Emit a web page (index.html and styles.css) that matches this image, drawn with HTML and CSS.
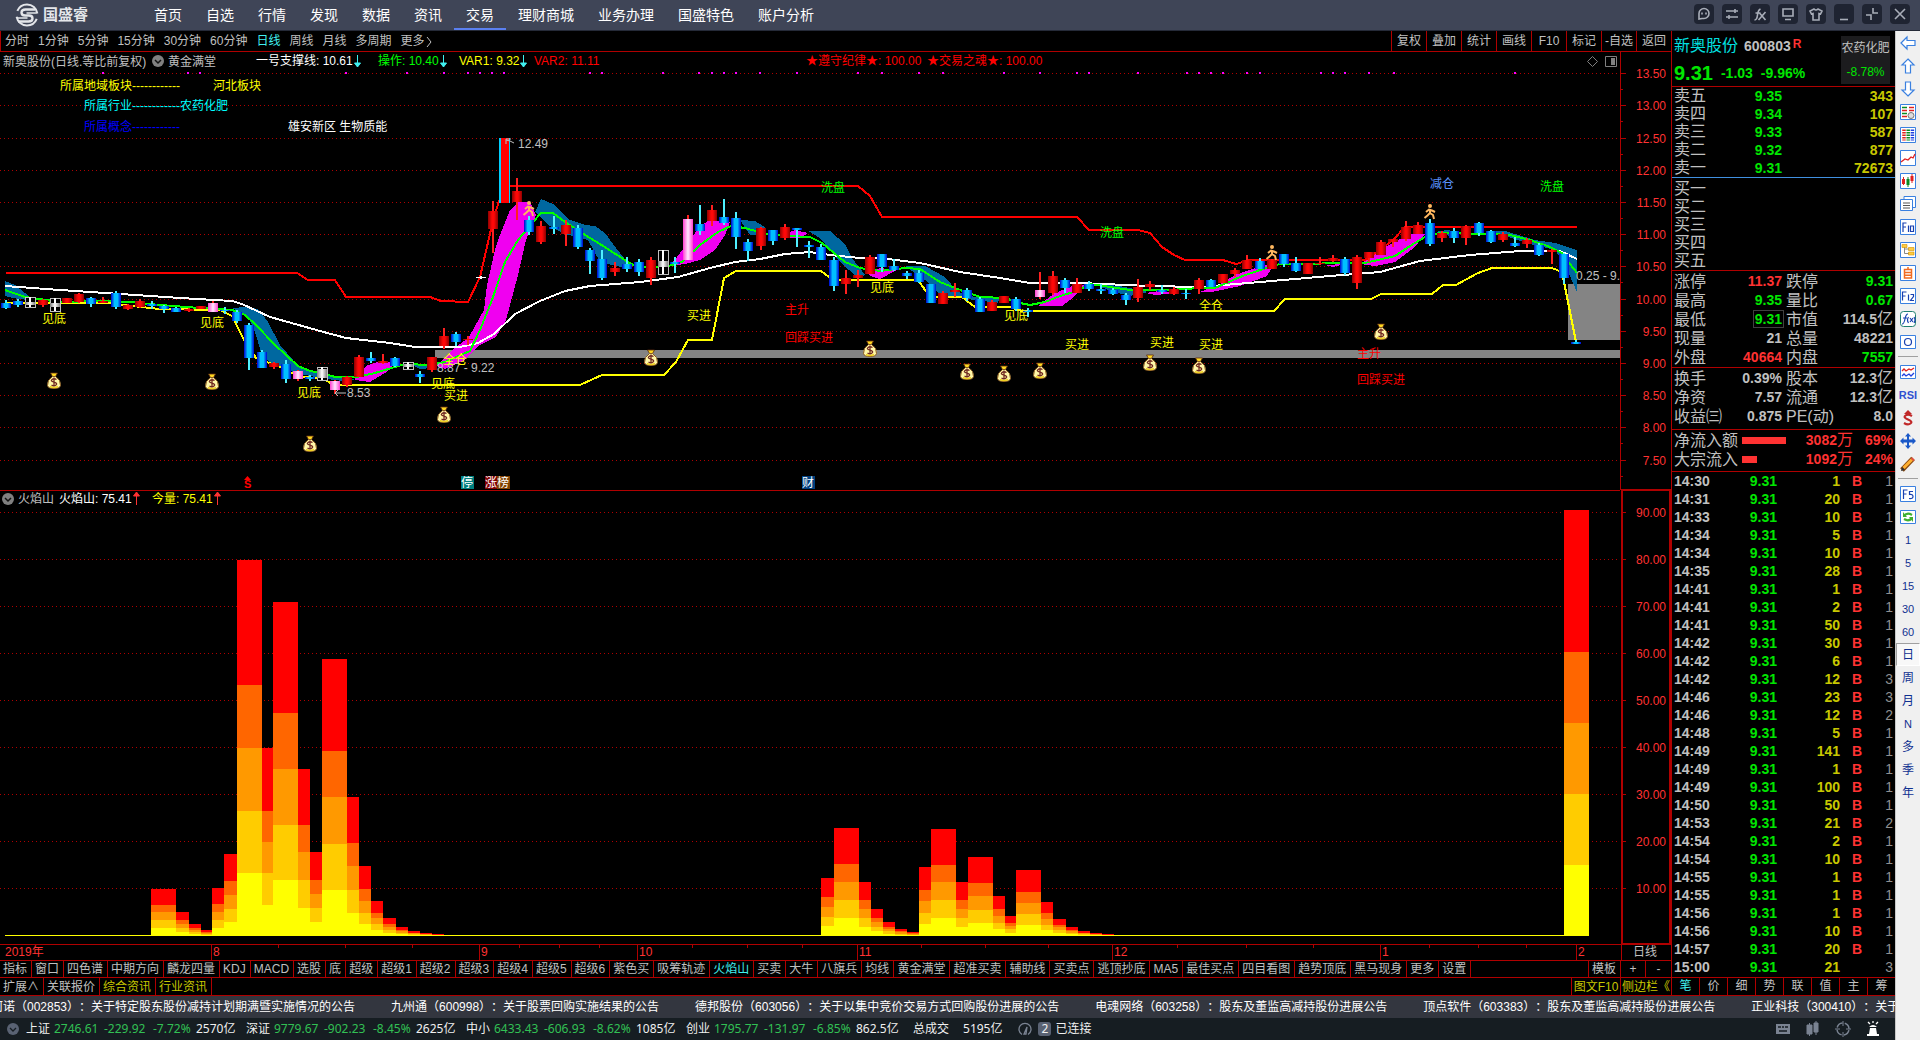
FILE: index.html
```html
<!DOCTYPE html>
<html lang="zh-CN">
<head>
<meta charset="utf-8">
<title>国盛睿 - 新奥股份 600803</title>
<link rel="stylesheet" href="styles.css">
</head>
<body>
<div class="app">
<header class="topbar">
  <div class="brand">
    <svg class="brand-mark" viewBox="0 0 26 26"><circle cx="13" cy="13" r="10.5" fill="none" stroke="#e4e6ea" stroke-width="2" stroke-dasharray="27 6 27 6" stroke-dashoffset="-4"/><path d="M21 7.500H11.500Q7.500 7.500 7.500 10.500T11 13.500H15Q18.500 13.500 18.500 16.500T14.500 19.500H4" fill="none" stroke="#e4e6ea" stroke-width="2.400"/><path d="M22.500 11H12.500M13.500 16H3.500" stroke="#e4e6ea" stroke-width="1.300"/></svg>
    <span>国盛睿</span>
  </div>
  <nav class="nav">
    <a href="#">首页</a><a href="#">自选</a><a href="#">行情</a><a href="#">发现</a><a href="#">数据</a><a href="#">资讯</a><a href="#" class="current">交易</a><a href="#">理财商城</a><a href="#">业务办理</a><a href="#">国盛特色</a><a href="#">账户分析</a>
  </nav>
  <div class="window-tools">
    <button aria-label="客服"><svg viewBox="0 0 20 20"><path d="M5 15V9.500A5 5 0 1 1 10 14.500L8 14.500z"/><path d="M8 8.500v2M12 8.500v2"/></svg></button>
    <button aria-label="切换"><svg viewBox="0 0 20 20"><path d="M4 7h12M4 13h12M13 5v4M7 11v4"/></svg></button>
    <button aria-label="公式"><svg viewBox="0 0 20 20"><path d="M4.500 16q2.500 0 3-5t3-6M5.500 9h5M9.500 9l6 7M15.500 8l-7 8"/></svg></button>
    <button aria-label="屏幕"><svg viewBox="0 0 20 20"><path d="M5 5h10v7H5zM7 15.500h6"/></svg></button>
    <button aria-label="皮肤"><svg viewBox="0 0 20 20"><path d="M8 5l-4 2 1.500 3 1.500-.5V16h6V9.500l1.500.5L16 7l-4-2q-2 2-4 0z"/></svg></button>
    <button aria-label="最小化"><svg viewBox="0 0 20 20"><path d="M6 15.500h8"/></svg></button>
    <button aria-label="还原"><svg viewBox="0 0 20 20"><path d="M11 4v5h5M9 16v-5H4"/></svg></button>
    <button aria-label="关闭"><svg viewBox="0 0 20 20"><path d="M5 5l10 10M15 5L5 15"/></svg></button>
  </div>
</header>

<div class="body">
<main class="main">
<div class="workspace">
<section class="charts">
  <div class="period-bar">
    <div class="periods"><button>分时</button><button>1分钟</button><button>5分钟</button><button>15分钟</button><button>30分钟</button><button>60分钟</button><button class="on">日线</button><button>周线</button><button>月线</button><button>多周期</button><button>更多<svg class="chevron" viewBox="0 0 8 12"><path d="M2 1l4 5-4 5" fill="none" stroke="#c0c0c0"/></svg></button></div>
    <div class="chart-tools"><button>复权</button><button>叠加</button><button>统计</button><button>画线</button><button>F10</button><button>标记</button><button>-自选</button><button>返回</button></div>
  </div>

  <svg class="chart" viewBox="0 52 1671 439">
    <defs>
      <linearGradient id="blue"><stop offset="0" stop-color="#0000d0"/><stop offset=".35" stop-color="#00c0ff"/><stop offset=".65" stop-color="#00c0ff"/><stop offset="1" stop-color="#0000d0"/></linearGradient>
      <linearGradient id="red"><stop offset="0" stop-color="#900000"/><stop offset=".4" stop-color="#ff0808"/><stop offset=".6" stop-color="#ff0808"/><stop offset="1" stop-color="#900000"/></linearGradient>
      <linearGradient id="pink"><stop offset="0" stop-color="#ff40d0"/><stop offset=".5" stop-color="#ffe8ff"/><stop offset="1" stop-color="#ff40d0"/></linearGradient>
      <linearGradient id="white"><stop offset="0" stop-color="#808080"/><stop offset=".5" stop-color="#ffffff"/><stop offset="1" stop-color="#808080"/></linearGradient>
      <g id="bag"><path d="M-3.500-8h7L1.500-4.500h-3z" fill="#ffd820" stroke="#5a2a10" stroke-width=".8"/><path d="M-1.500-4.500h3Q7-1 6.500 4.500 6 7.500 0 7.500T-6.500 4.500Q-7-1-1.500-4.500z" fill="#fff7a8" stroke="#8a5a20" stroke-width="1"/><path d="M-4 5.500Q0 7.500 4 5.500" fill="none" stroke="#f0d020" stroke-width="1.500"/><path d="M2.500-1.500Q0-3-2-1.500T0 1.200 2 4-2.500 4M0-3.500v9" fill="none" stroke="#702820" stroke-width="1.300"/></g>
      <g id="runner" fill="none" stroke="#ffb860" stroke-width="2"><circle cx="0" cy="-6" r="1" /><path d="M0-3v4M-4 0l3-2.500 3 1 3 1.500M0 1l-2.500 2.500L-5.500 6M0 1l3 2 1 4"/></g>
      <clipPath id="plot"><rect x="0" y="52" width="1620" height="438"/></clipPath>
    </defs>
    <g id="price-grid" class="crisp"></g>
    <g id="price-plot" class="crisp" clip-path="url(#plot)"></g>
    <g class="frame crisp"><path d="M1620.500 52V490M0 490.500H1620"/><path d="M1621 490H1671" stroke-width="2"/></g>

    <g class="gray">
      <text x="3" y="66">新奥股份(日线.等比前复权)</text><text x="168" y="66">黄金满堂</text>
      <text x="518" y="148">12.49</text><text x="347" y="397">8.53</text><text x="437" y="372">8.87 - 9.22</text>
      <text x="1576" y="280" clip-path="url(#plot)">0.25 - 9.36</text>
    </g>
    <circle cx="158" cy="61" r="6" fill="#808080"/><path d="M155 60l3 3 3-3" fill="none" stroke="#111" stroke-width="1.500"/>
    <path d="M514 143l-4-2-4-1M506 144v-5h5M346 393h-11M338 390l-3 3 3 3" fill="none" stroke="#c0c0c0"/>
    <g class="legend">
      <text x="256" y="65" fill="#fff">一号支撑线: 10.61</text><text x="378" y="65" fill="#0f0">操作: 10.40</text><text x="459" y="65" fill="#ff0">VAR1: 9.32</text><text x="534" y="65" fill="#f00">VAR2: 11.11</text>
      <text x="806" y="65" fill="#f00">★遵守纪律★: 100.00</text><text x="927" y="65" fill="#f00">★交易之魂★: 100.00</text>
      <path d="M357.500 55v12M354.500 63h6l-3 4zM443.500 55v12M440.500 63h6l-3 4zM523.500 55v12M520.500 63h6l-3 4z" fill="#40f0f0" stroke="#40f0f0"/>
    </g>
    <path d="M1592.500 56.500l5 5-5 5-5-5z M1605.500 56.500h11v10h-11z" fill="none" stroke="#808080"/><path d="M1611 58h4v7h-4z" fill="#808080"/>
    <g fill="#ff0"><text x="60" y="90">所属地域板块------------</text><text x="213" y="90">河北板块</text></g>
    <g fill="#0ff"><text x="84" y="110">所属行业------------农药化肥</text></g>
    <text x="84" y="131" fill="#00f">所属概念------------</text>
    <text x="288" y="131" fill="#fff">雄安新区 生物质能</text>
    <g fill="#0f0"><text x="821" y="192">洗盘</text><text x="1100" y="237">洗盘</text><text x="1540" y="191">洗盘</text></g>
    <text x="1430" y="188" fill="#5c94ff">减仓</text>
    <g fill="#ff0">
      <text x="42" y="323">见底</text><text x="200" y="327">见底</text><text x="297" y="397">见底</text><text x="431" y="388">见底</text><text x="870" y="292">见底</text><text x="1004" y="320">见底</text>
      <text x="444" y="400">买进</text><text x="687" y="320">买进</text><text x="1065" y="349">买进</text><text x="1150" y="347">买进</text><text x="1199" y="349">买进</text>
      <text x="443" y="364">全仓</text><text x="1199" y="310">全仓</text>
    </g>
    <g fill="#f00"><text x="785" y="314">主升</text><text x="785" y="342">回踩买进</text><text x="1357" y="358">主升</text><text x="1357" y="384">回踩买进</text></g>
    <path d="M244 480l3.500-4 3.500 4z" fill="#f00"/><text x="244" y="488" fill="#f00" class="strong">S</text>
    <path d="M461 476h13v13h-13z" fill="#008080"/><path d="M485 476h12v13h-12z" fill="#800000"/><path d="M497 476h13v13h-13z" fill="#804000"/><path d="M802 476h13v13h-13z" fill="#004080"/>
    <g fill="#fff"><text x="461" y="487">停</text><text x="485" y="487">涨榜</text><text x="802" y="487">财</text></g>
  </svg>

  <svg class="chart" viewBox="0 491 1671 470">
    <g id="volume-grid" class="crisp"></g>
    <g id="volume-plot" class="crisp"></g>
    <g class="frame crisp"><path d="M0 944.500H1671M0 960.500H1671M1621.500 944V961"/><path d="M1622 491V944M1670 491V944M1621 944H1671" stroke-width="2"/></g>
    <g id="dates" class="crisp"></g>
    <circle cx="8" cy="499" r="6" fill="#808080"/><path d="M5 498l3 3 3-3" fill="none" stroke="#111" stroke-width="1.500"/>
    <text x="18" y="503" fill="#c0c0c0">火焰山</text><text x="59" y="503" fill="#fff">火焰山: 75.41</text><text x="152" y="503" fill="#ff0">今量: 75.41</text>
    <path d="M136.500 505v-12M133.500 496h6l-3-4zM217.500 505v-12M214.500 496h6l-3-4z" fill="#ff3232" stroke="#ff3232"/>
    <text x="5" y="956" class="axis">2019年</text><text x="1633" y="956" fill="#c0c0c0">日线</text>
  </svg>

  <div class="tabs">
    <button>指标</button><button>窗口</button><button>四色谱</button><button>中期方向</button><button>麟龙四量</button><button>KDJ</button><button>MACD</button><button>选股</button><button>底</button><button>超级</button><button>超级1</button><button>超级2</button><button>超级3</button><button>超级4</button><button>超级5</button><button>超级6</button><button>紫色买</button><button>吸筹轨迹</button><button class="on">火焰山</button><button>买卖</button><button>大牛</button><button>八旗兵</button><button>均线</button><button>黄金满堂</button><button>超准买卖</button><button>辅助线</button><button>买卖点</button><button>逃顶抄底</button><button>MA5</button><button>最佳买点</button><button>四目看图</button><button>趋势顶底</button><button>黑马现身</button><button>更多</button><button>设置</button>
    <span class="fill"></span>
    <button>模板</button><button class="square">+</button><button class="square">-</button>
  </div>
  <div class="tabs second">
    <button>扩展∧</button><button>关联报价</button><button class="news">综合资讯</button><button class="news">行业资讯</button>
    <span class="fill"></span>
    <button class="news wide">图文F10</button><button class="news wide">侧边栏《</button>
  </div>
</section>

<aside class="quote">
  <div class="quote-head">
    <div>
      <div class="name"><b>新奥股份</b><span>600803</span><sup>R</sup></div>
      <div class="last"><strong>9.31</strong><span>-1.03</span><span>-9.96%</span></div>
    </div>
    <div class="sector"><span>农药化肥</span><span class="g">-8.78%</span></div>
  </div>
  <table class="book sell"><tbody>
    <tr><th>卖五</th><td>9.35</td><td>343</td></tr><tr><th>卖四</th><td>9.34</td><td>107</td></tr><tr><th>卖三</th><td>9.33</td><td>587</td></tr><tr><th>卖二</th><td>9.32</td><td>877</td></tr><tr><th>卖一</th><td>9.31</td><td>72673</td></tr>
  </tbody></table>
  <table class="book buy"><tbody>
    <tr><th>买一</th><td></td><td></td></tr><tr><th>买二</th><td></td><td></td></tr><tr><th>买三</th><td></td><td></td></tr><tr><th>买四</th><td></td><td></td></tr><tr><th>买五</th><td></td><td></td></tr>
  </tbody></table>
  <table class="stats"><tbody>
    <tr><th>涨停</th><td class="r">11.37</td><th>跌停</th><td class="g">9.31</td></tr>
    <tr><th>最高</th><td class="g">9.35</td><th>量比</th><td class="g">0.67</td></tr>
    <tr><th>最低</th><td class="g"><span class="boxed">9.31</span></td><th>市值</th><td>114.5<i>亿</i></td></tr>
    <tr><th>现量</th><td>21</td><th>总量</th><td>48221</td></tr>
    <tr><th>外盘</th><td class="r">40664</td><th>内盘</th><td class="g">7557</td></tr>
  </tbody></table>
  <table class="stats ratios"><tbody>
    <tr><th>换手</th><td>0.39%</td><th>股本</th><td>12.3<i>亿</i></td></tr>
    <tr><th>净资</th><td>7.57</td><th>流通</th><td>12.3<i>亿</i></td></tr>
    <tr><th>收益㈢</th><td>0.875</td><th>PE(动)</th><td>8.0</td></tr>
  </tbody></table>
  <table class="flow"><tbody>
    <tr><th>净流入额</th><td class="meter"><span style="width:44px"></span></td><td>3082<i>万</i></td><td>69%</td></tr>
    <tr><th>大宗流入</th><td class="meter"><span style="width:15px"></span></td><td>1092<i>万</i></td><td>24%</td></tr>
  </tbody></table>
  <table class="trades"><tbody>
    <tr><td>14:30</td><td>9.31</td><td>1</td><td>B</td><td>1</td></tr>
    <tr><td>14:31</td><td>9.31</td><td>20</td><td>B</td><td>1</td></tr>
    <tr><td>14:33</td><td>9.31</td><td>10</td><td>B</td><td>1</td></tr>
    <tr><td>14:34</td><td>9.31</td><td>5</td><td>B</td><td>1</td></tr>
    <tr><td>14:34</td><td>9.31</td><td>10</td><td>B</td><td>1</td></tr>
    <tr><td>14:35</td><td>9.31</td><td>28</td><td>B</td><td>1</td></tr>
    <tr><td>14:41</td><td>9.31</td><td>1</td><td>B</td><td>1</td></tr>
    <tr><td>14:41</td><td>9.31</td><td>2</td><td>B</td><td>1</td></tr>
    <tr><td>14:41</td><td>9.31</td><td>50</td><td>B</td><td>1</td></tr>
    <tr><td>14:42</td><td>9.31</td><td>30</td><td>B</td><td>1</td></tr>
    <tr><td>14:42</td><td>9.31</td><td>6</td><td>B</td><td>1</td></tr>
    <tr><td>14:42</td><td>9.31</td><td>12</td><td>B</td><td>3</td></tr>
    <tr><td>14:46</td><td>9.31</td><td>23</td><td>B</td><td>3</td></tr>
    <tr><td>14:46</td><td>9.31</td><td>12</td><td>B</td><td>2</td></tr>
    <tr><td>14:48</td><td>9.31</td><td>5</td><td>B</td><td>1</td></tr>
    <tr><td>14:49</td><td>9.31</td><td>141</td><td>B</td><td>1</td></tr>
    <tr><td>14:49</td><td>9.31</td><td>1</td><td>B</td><td>1</td></tr>
    <tr><td>14:49</td><td>9.31</td><td>100</td><td>B</td><td>1</td></tr>
    <tr><td>14:50</td><td>9.31</td><td>50</td><td>B</td><td>1</td></tr>
    <tr><td>14:53</td><td>9.31</td><td>21</td><td>B</td><td>2</td></tr>
    <tr><td>14:54</td><td>9.31</td><td>2</td><td>B</td><td>1</td></tr>
    <tr><td>14:54</td><td>9.31</td><td>10</td><td>B</td><td>1</td></tr>
    <tr><td>14:55</td><td>9.31</td><td>1</td><td>B</td><td>1</td></tr>
    <tr><td>14:55</td><td>9.31</td><td>1</td><td>B</td><td>1</td></tr>
    <tr><td>14:56</td><td>9.31</td><td>1</td><td>B</td><td>1</td></tr>
    <tr><td>14:56</td><td>9.31</td><td>10</td><td>B</td><td>1</td></tr>
    <tr><td>14:57</td><td>9.31</td><td>20</td><td>B</td><td>1</td></tr>
    <tr><td>15:00</td><td>9.31</td><td>21</td><td></td><td>3</td></tr>
  </tbody></table>
  <div class="quote-tabs"><button class="on">笔</button><button>价</button><button>细</button><button>势</button><button>联</button><button>值</button><button>主</button><button>筹</button></div>
</aside>
</div>

<div class="ticker">
  <a href="#">皮阿诺（002853）：关于特定股东股份减持计划期满暨实施情况的公告</a>
  <a href="#">九州通（600998）：关于股票回购实施结果的公告</a>
  <a href="#">德邦股份（603056）：关于以集中竞价交易方式回购股份进展的公告</a>
  <a href="#">电魂网络（603258）：股东及董监高减持股份进展公告</a>
  <a href="#">顶点软件（603383）：股东及董监高减持股份进展公告</a>
  <a href="#">正业科技（300410）：关于</a>
</div>

<footer class="status">
  <svg class="status-more" viewBox="0 0 12 12"><circle cx="6" cy="6" r="6" fill="#596273"/><path d="M3 5l3 3 3-3" fill="none" stroke="#161d22" stroke-width="1.300"/></svg>
  <div class="index"><span>上证</span><em>2746.61</em><em>-229.92</em><em>-7.72%</em><span>2570亿</span></div>
  <div class="index"><span>深证</span><em>9779.67</em><em>-902.23</em><em>-8.45%</em><span>2625亿</span></div>
  <div class="index"><span>中小</span><em>6433.43</em><em>-606.93</em><em>-8.62%</em><span>1085亿</span></div>
  <div class="index"><span>创业</span><em>1795.77</em><em>-131.97</em><em>-6.85%</em><span>862.5亿</span></div>
  <div class="turnover"><span>总成交</span><span>5195亿</span></div>
  <div class="link-state">
    <svg viewBox="0 0 14 14"><path d="M4 12.500A6 6 0 1 1 10 12.500M6 12l3-7-1 7z" fill="none" stroke="#7a8392" stroke-width="1.300"/></svg>
    <span class="count">2</span><span>已连接</span>
  </div>
  <span class="fill"></span>
  <div class="status-icons">
    <svg viewBox="0 0 16 16"><path d="M1 3h14v10H1z" fill="#7a8392"/><path d="M3 6h3M7 6h2M10 6h3M4 10h8" stroke="#161d22" stroke-width="1.500"/></svg>
    <svg viewBox="0 0 16 16"><path d="M2 4h5v9H2zM9 2h4v9H9zM4.500 2v13M11 0v14" fill="#7a8392" stroke="#7a8392"/></svg>
    <svg viewBox="0 0 16 16"><circle cx="8" cy="8" r="6" fill="none" stroke="#7a8392" stroke-width="1.500" stroke-dasharray="7 2.400" stroke-dashoffset="-1.200"/><path d="M8 0v5M8 11v5M0 8h5M11 8h5" stroke="#7a8392"/></svg>
    <svg viewBox="0 0 16 16"><path d="M4 6q4-4 8 0H4zM5 7h6l1 6h2v2H2v-2h2z" fill="#fff"/><path d="M8 0v2M3 1l2 2M13 1l-2 2" stroke="#fff" stroke-width="1.300"/></svg>
  </div>
</footer>
</main>

<aside class="rail">
  <button aria-label="后退"><svg viewBox="0 0 16 16" class="arrow"><path d="M1 8l6-6v3.500h8v5H7V14z"/></svg></button>
  <button aria-label="上翻"><svg viewBox="0 0 16 16" class="arrow"><path d="M8 1l6 6h-3.500v8h-5V7H2z"/></svg></button>
  <button aria-label="下翻"><svg viewBox="0 0 16 16" class="arrow"><path d="M8 15l6-6h-3.500V1h-5v8H2z"/></svg></button>
  <button aria-label="报价"><svg viewBox="0 0 16 16"><path class="box" d="M.5.5h15v15H.5z"/><path d="M2 3.500h5M2 9.500h5" stroke="#0a8a20" stroke-width="1.300"/><path d="M2 6.500h5M2 12.500h5M9 3.500h5M9 6.500h5" stroke="#e02020" stroke-width="1.300"/><circle cx="11" cy="11.500" r="3" fill="#ddd" stroke="#777"/></svg></button>
  <button aria-label="列表"><svg viewBox="0 0 16 16"><path class="box" d="M.5.5h15v15H.5z"/><g stroke-width="3.500" stroke-dasharray="1.500 1"><path d="M4 2.500v11" stroke="#e02020"/><path d="M8.200 2.500v11" stroke="#0a8a20"/><path d="M12.400 2.500v11" stroke="#2040e0"/></g></svg></button>
  <button aria-label="分时"><svg viewBox="0 0 16 16"><path class="box" d="M.5.5h15v15H.5z"/><path d="M1 12l4-3 3 1 3-3 2 1 2-4" fill="none" stroke="#e02020" stroke-width="1.300"/></svg></button>
  <button aria-label="K线"><svg viewBox="0 0 16 16"><path class="box" d="M.5.5h15v15H.5z"/><path d="M3.500 4v8M12 1v9" stroke="#e02020"/><path d="M8 4v10" stroke="#0a8a20"/><path d="M2 6h3v5H2zM10.500 3h3v5h-3z" fill="#e02020"/><path d="M6.500 6h3v6h-3z" fill="#0a8a20"/></svg></button>
  <button aria-label="多窗"><svg viewBox="0 0 16 16"><path class="box" d="M4 .5h11.500v11H4z"/><path class="box" d="M.5 3.500h12v11H.5z"/><path d="M3 7h7M3 9.500h7M3 12h7" stroke="#555"/></svg></button>
  <button aria-label="F10"><svg viewBox="0 0 16 16"><path class="box" d="M.5.5h15v15H.5z"/><path class="ink" d="M3 13V4h3.500M3 8h3M8.500 6.500V13M10.500 7h3v5.500h-3z"/></svg></button>
  <button aria-label="树形"><svg viewBox="0 0 16 16"><path class="box" d="M.5.5h15v15H.5z"/><path d="M4.500 4v7.500H9M4.500 7H9" fill="none" stroke="#888"/><path d="M2 2.500h5v3H2zM8.500 5.500H14v3H8.500zM8.500 10H14v3H8.500z" fill="#ffcc40" stroke="#d09000" stroke-width=".6"/></svg></button>
  <button aria-label="自选"><svg viewBox="0 0 16 16"><path class="box" d="M.5.5h15v15H.5z"/><path d="M8 2v2M4.500 4.500h7v8.500h-7zM4.500 7.500h7M4.500 10.200h7" fill="none" stroke="#f06a20" stroke-width="1.500"/></svg></button>
  <button aria-label="F12"><svg viewBox="0 0 16 16"><path class="box" d="M.5.5h15v15H.5z"/><path class="ink" d="M2.500 12.500V4h4M2.500 8h3M8.500 6.500v6M10.500 6.500h3v2l-3 4h3.500"/></svg></button>
  <button aria-label="公式"><svg viewBox="0 0 16 16"><rect x=".5" y=".5" width="15" height="15" rx="3" fill="#fff" stroke="#208070"/><path class="ink" d="M2 13q2 0 3-5t3-5M3 7h4M8.500 6q-2 3 0 6M10 7l3 4M13 7l-3 4M14 6q2 3 0 6"/></svg></button>
  <button aria-label="圆"><svg viewBox="0 0 16 16"><path class="box" d="M.5 1.500h15v13H.5z"/><circle class="ink" cx="8" cy="8" r="3.500"/></svg></button>
  <hr>
  <button aria-label="叠加走势"><svg viewBox="0 0 16 16"><path class="box" d="M.5 1.500h15v13H.5z"/><path d="M2 7l2-2 2 2 3-2 2 1 3-2" fill="none" stroke="#e02020" stroke-width="1.300"/><path d="M2 12l2-2 2 2 3-2 2 2 3-3" fill="none" stroke="#2040e0" stroke-width="1.300"/></svg></button>
  <button class="rsi">RSI</button>
  <button aria-label="除权"><svg viewBox="0 0 16 16"><path d="M4 4l4-4 4 4z" fill="#c02828"/><path d="M12 6Q8 3.500 5.500 5.500T8 9.500t2.500 4T4 13" fill="none" stroke="#c02828" stroke-width="2.200"/></svg></button>
  <button aria-label="移动"><svg viewBox="0 0 16 16"><path d="M8 0l3 3.500H9v3h3.500v-2L16 8l-3.500 3.500v-2H9v3h2L8 16l-3-3.500h2v-3H3.500v2L0 8l3.500-3.500v2H7v-3H5z" fill="#1a58c8"/></svg></button>
  <button aria-label="画笔"><svg viewBox="0 0 16 16"><path d="M2 14L13 2.500" stroke="#8a4a10" stroke-width="5"/><path d="M3.500 12L12 3.500" stroke="#ffb030" stroke-width="3"/><path d="M1 15l1-4 3 3z" fill="#333"/><path d="M11.500 2l2.500 2.500" stroke="#e05040" stroke-width="2"/></svg></button>
  <hr>
  <button aria-label="F5"><svg viewBox="0 0 16 16"><path class="box" d="M.5.5h15v15H.5z"/><path class="ink" d="M3.500 13V4h4M3.500 8h3M13 5.500H9.500v3q3.500-.5 3.500 2T9 12.500"/></svg></button>
  <button aria-label="刷新"><svg viewBox="0 0 16 16"><path class="box" d="M.5 1.500h15v13H.5z"/><path d="M4 7q3-4 8-1M12 9q-3 4-8 1" fill="none" stroke="#40b030" stroke-width="2.200"/><path d="M3 3v5h4zM13 13V8H9z" fill="#40b030"/></svg></button>
  <button>1</button><button>5</button><button>15</button><button>30</button><button>60</button>
  <button class="cjk pressed">日</button><button class="cjk">周</button><button class="cjk">月</button><button>N</button><button class="cjk">多</button><button class="cjk">季</button><button class="cjk">年</button>
</aside>
</div>
</div>
<script src="script.js"></script>
</body>
</html>
```
FILE: styles.css
```css
* { box-sizing: border-box; }
body { margin: 0; background: #000; color: #c0c0c0; font: 12px/16px "Liberation Sans", "Noto Sans CJK SC", sans-serif; text-spacing-trim: space-all; }
button { margin: 0; padding: 0; border: 0; background: none; color: inherit; font: inherit; white-space: nowrap; cursor: pointer; }
a { color: inherit; text-decoration: none; white-space: nowrap; }
em, i { font-style: normal; }
table { width: 100%; border-collapse: collapse; table-layout: fixed; }
th, td { padding: 0; white-space: nowrap; vertical-align: middle; }
.app { display: flex; flex-direction: column; min-height: 100vh; }
.fill { flex: 1; }

.topbar { display: flex; align-items: center; height: 31px; background: #3f4557; border-bottom: 1px solid #252a38; }
.brand { display: flex; align-items: center; gap: 3px; width: 142px; padding-left: 14px; color: #e4e6ea; font-size: 15px; font-weight: bold; line-height: 24px; }
.brand-mark { width: 26px; height: 26px; }
.nav { display: flex; flex: 1; height: 30px; color: #fff; font-size: 14px; line-height: 30px; }
.nav a { padding: 0 12px; }
.nav .current { border-bottom: 2px solid #5b80f0; }
.window-tools { display: flex; gap: 8px; padding: 0 10px 2px 0; }
.window-tools button { width: 20px; height: 20px; border-radius: 4px; background: #1f2432; }
.window-tools svg { display: block; width: 20px; height: 20px; fill: none; stroke: #a8adb8; stroke-width: 1.6; }

.body { display: flex; flex: 1; }
.main { display: flex; flex-direction: column; flex: 1; min-width: 0; }
.workspace { display: flex; }
.charts { flex: 1; min-width: 0; }
.chart { display: block; width: 100%; height: auto; font-size: 12px; }
.crisp { shape-rendering: crispEdges; }
.frame { fill: none; stroke: #b00000; }
.gray { fill: #c0c0c0; }
.axis { fill: #ff3232; }
.strong { font-size: 11px; font-weight: bold; }

.period-bar { display: flex; justify-content: space-between; height: 21px; border-bottom: 1px solid #b00000; border-left: 1px solid #b00000; line-height: 20px; }
.periods { display: flex; gap: 9px; padding-left: 4px; }
.chevron { width: 8px; height: 12px; vertical-align: middle; }
.on { color: #40f0f0; }
.chart-tools { display: flex; }
.chart-tools button { width: 35px; border-left: 1px solid #b00000; }

.tabs { display: flex; height: 17px; border-bottom: 1px solid #b00000; line-height: 16px; }
.tabs button { padding: 0 4px 0 3px; border-right: 1px solid #b00000; }
.tabs .square { width: 25px; padding: 0; }
.tabs .fill + button { border-left: 1px solid #b00000; }
.tabs button:last-child { border-right: 0; }
.tabs.second { height: 18px; }
.tabs .news { color: #c8c800; }
.tabs .wide { width: 50px; padding: 0; }

.quote { width: 224px; border-left: 1px solid #b00000; font-size: 14px; line-height: 18px; font-weight: bold; }
.quote-head { display: flex; justify-content: space-between; height: 56px; padding: 5px 5px 0 2px; border-bottom: 1px solid #b00000; }
.name { display: flex; gap: 6px; line-height: 20px; }
.name b { color: #00e0e0; font-size: 16px; font-weight: normal; }
.name sup { margin-left: -4px; color: #ff3232; font-size: 12px; line-height: 16px; vertical-align: top; }
.last { display: flex; gap: 8px; padding-top: 4px; color: #00e600; line-height: 26px; }
.last strong { font-size: 20px; }
.sector { display: flex; flex-direction: column; width: 49px; height: 48px; background: #1c1c1e; font-size: 12px; font-weight: normal; line-height: 24px; text-align: center; }
.g { color: #00e600; }
.r { color: #ff3232; }
.quote th { font-size: 16px; font-weight: normal; text-align: left; }
.quote i { font-size: 16px; font-weight: normal; line-height: 1px; }
.quote table { border-collapse: separate; border-spacing: 0; padding: 0 2px; border-bottom: 1px solid #b00000; }
.quote tr { height: 18px; }
.book td { text-align: right; color: #c8c800; }
.book th { width: 48px; }
.book td:nth-child(2) { width: 60px; color: #00e600; }
.quote .sell { border-bottom-color: #4090e0; }
.quote .buy { padding-top: 2px; }
.quote .stats, .quote .flow { padding-top: 1px; line-height: 19px; }
.quote .stats tr, .quote .flow tr { height: 19px; }
.stats td { text-align: right; }
.stats th:first-child { width: 48px; }
.stats td:nth-child(2) { width: 60px; }
.stats th:nth-child(3) { width: 46px; padding-left: 4px; }
.quote .ratios { padding-bottom: 3px; }
.boxed { display: inline-block; height: 18px; margin: 0 -2px 0 0; padding: 0 1px; border: 1px solid #404040; line-height: 16px; vertical-align: top; }
.quote .flow { padding-bottom: 2px; color: #ff3232; }
.flow th { width: 68px; color: #c0c0c0; }
.flow td { text-align: right; }
.flow .meter { width: 44px; }
.meter span { display: block; height: 7px; background: #ff3232; }
.flow td:nth-child(3) { width: 67px; }
.quote .trades { padding-bottom: 1px; }
.trades td { text-align: right; }
.trades td:nth-child(1) { width: 40px; text-align: left; }
.trades td:nth-child(2) { width: 63px; color: #00e600; }
.trades td:nth-child(3) { width: 63px; color: #c8c800; }
.trades td:nth-child(4) { width: 32px; padding-left: 12px; color: #ff3232; text-align: left; }
.trades td:nth-child(5) { color: #909090; font-weight: normal; }
.quote-tabs { display: flex; height: 18px; border-bottom: 1px solid #b00000; font-size: 12px; font-weight: normal; line-height: 17px; }
.quote-tabs button { flex: 1; border-right: 1px solid #b00000; }
.quote-tabs button:last-child { border-right: 0; }

.ticker { display: flex; gap: 36px; height: 22px; padding-left: 3px; overflow: hidden; background: #33363f; color: #fff; line-height: 22px; }
.ticker a:first-child { margin-left: -24px; }
.status { display: flex; align-items: center; flex: 1; min-height: 22px; padding: 0 14px 0 7px; background: #161d22; color: #f0f0f0; font: 12px/22px "Noto Sans", "Noto Sans CJK SC", sans-serif; }
.status-more { width: 12px; height: 12px; margin-right: 7px; }
.index { display: grid; grid-template-columns: 28px 50px 49px 43px 50px; }
.index em { color: #32c054; }
.turnover { display: flex; gap: 14px; padding-left: 7px; }
.link-state { display: flex; align-items: center; gap: 4px; padding-left: 16px; }
.link-state svg { width: 14px; height: 14px; }
.count { width: 13px; margin-left: 2px; border-radius: 3px; background: #596273; line-height: 14px; text-align: center; }
.status-icons { display: flex; gap: 14px; }
.status-icons svg { width: 16px; height: 16px; }

.rail { display: flex; flex-direction: column; width: 25px; border-left: 1px solid #c8c8c8; background: #f0f0f0; color: #103090; }
.rail button { display: flex; align-items: center; justify-content: center; height: 23px; font-size: 11px; }
.rail svg { width: 16px; height: 16px; }
.rail hr { width: 20px; height: 1px; margin: 3px auto; border: 0; background: #a0a0a0; }
.rail .cjk { font-size: 12px; }
.rail .rsi { color: #3050d0; font-weight: bold; }
.rail .pressed { border: 1px solid #a0a0a0; border-right-color: #fff; border-bottom-color: #fff; background: #f8f8f8; }
.box { fill: #fff; stroke: #3a80e0; }
.ink { fill: none; stroke: #1840b0; stroke-width: 1.2; }
.arrow { fill: #fff; stroke: #3a80e0; stroke-width: 1.2; }
```
FILE: script.js
```js
const RED = '#b00000';
const put = (id, html) => { document.getElementById(id).innerHTML = html; };

// Dotted grid lines, ticks and labels of one value axis
function grid(rows, half) {
  return rows.map(([y, label]) =>
    `<path d="M0 ${y}.5H1620" stroke="${RED}" stroke-dasharray="1 3"/>` +
    `<path d="M1621 ${y}.5h5M1621 ${y + half}.5h2" stroke="${RED}"/>` +
    `<text class="axis" x="1666" y="${y + 5}" text-anchor="end">${label}</text>`).join('');
}
const priceRows = [73, 105, 138, 170, 202, 234, 266, 299, 331, 363, 395, 427, 460]
  .map((y, n) => [y, (13.5 - n * 0.5).toFixed(2)]);
put('price-grid', grid(priceRows, 16));
const volumeRows = [512, 559, 606, 653, 700, 747, 794, 841, 888].map((y, n) => [y, (90 - n * 10).toFixed(2)]);
put('volume-grid', grid(volumeRows, 23));

const teal = ['5,281 15,285 30,297 30,300 18,299 5,296',
  '232,308 245,307 258,309 268,322 280,345 300,368 322,374 340,377 355,379 350,382 320,378 300,374 280,368 270,362 262,356 256,335 248,316',
  '410,364 425,364 432,368 420,369', '535,212 541,199 553,204 570,220 585,225 595,226 605,233 616,248 632,268 625,268 600,262 588,240 565,234 548,225',
  '740,220 755,221 766,228 765,236 750,235', '808,231 830,231 845,244 852,258 865,275 858,278 840,262 820,238',
  '905,266 925,266 945,277 958,292 975,297 1000,297 998,303 960,298 940,294 925,280', '1095,284 1120,286 1148,292 1130,296 1110,291',
  '1435,232 1447,230 1460,232 1450,236', '1490,231 1505,231 1535,240 1555,243 1577,250 1577,292 1565,265 1555,250 1530,244'];
const magenta = ['355,377 366,366 380,361 395,363 385,373 370,382 355,380',
  '436,366 450,352 469,337 484,310 487,285 495,250 500,235 510,210 518,202 530,202 536,215 526,240 518,275 506,320 496,337 478,346 465,360 445,369',
  '670,266 690,240 700,226 710,220 730,222 725,235 715,250 700,260 685,264', '785,234 795,230 808,233 800,238 785,238',
  '868,272 880,268 897,270 880,279 870,276', '1038,306 1055,293 1075,285 1085,285 1070,300 1062,306', '1145,293 1160,291 1180,293 1155,295',
  '1200,292 1220,284 1237,274 1255,268 1275,262 1267,276 1240,286 1212,292', '1325,265 1345,264 1333,267',
  '1360,264 1380,250 1398,240 1415,233 1425,234 1415,247 1395,262 1375,266'];
const lines = {
  '#ffffff': '5,286 60,290 120,294 180,298 232,301 242,304 270,317 320,331 346,338 390,343 415,347 460,347 478,343 494,334 515,314 540,301 565,291 590,286 640,282 678,277 710,268 735,262 760,259 785,254 810,252 830,255 860,258 880,258 920,263 960,272 1000,278 1030,283 1080,283 1150,286 1200,287 1260,282 1330,276 1380,272 1420,261 1470,255 1520,251 1560,251 1577,259',
  '#ffff00': '6,303 110,303 123,305 160,309 220,310 232,316 243,338 256,358 280,367 300,377 322,378 334,385 580,385 602,375 664,375 676,362 688,340 712,340 724,278 736,271 821,271 833,280 918,280 930,297 962,297 975,307 1010,307 1022,311 1274,311 1285,299 1371,299 1381,294 1432,294 1443,285 1456,285 1478,273 1492,268 1552,268 1562,272 1576,342',
  '#ff0000': '6,273 297,273 308,280 335,280 346,297 430,297 441,301 468,302 480,277 492,225 498,204 503,190 509,186 858,186 870,196 882,217 1077,217 1089,230 1138,230 1150,233 1162,247 1174,255 1185,260 1223,260 1236,264 1250,260 1365,260 1380,250 1393,240 1405,227 1577,227',
  '#00ff00': '5,290 25,297 60,302 100,301 130,302 160,305 200,308 232,310 245,315 256,325 275,345 298,366 310,371 322,373 335,377 357,377 375,373 405,364 430,365 445,362 470,351 480,330 492,300 505,262 518,240 533,222 541,213 553,213 565,222 585,235 600,244 631,264 640,267 665,267 682,262 700,245 718,232 731,226 745,228 770,235 810,237 822,243 845,262 860,268 880,271 905,268 920,269 940,282 960,290 980,297 1005,298 1020,303 1030,305 1045,302 1060,296 1077,291 1090,284 1110,287 1130,290 1170,290 1200,288 1215,288 1240,277 1260,270 1280,264 1365,263 1395,256 1410,246 1425,237 1440,233 1490,234 1510,235 1530,240 1550,247 1562,253 1570,264 1577,273'
};
// One candle per trading day: kind, high, body top, body bottom, low
const candles = `b300,303,308,309 b299,301,305,307 w297,302,305,307 r299,300,305,307 w298,303,307,311 r298,298,303,303 r293,294,302,303 b297,298,304,307 r297,301,303,303 b291,293,307,309
r304,305,309,310 r299,301,307,308 b301,304,306,309 b305,306,309,313 b307,308,312,312 r308,309,311,312 r306,306,309,309 p301,303,312,312 b307,310,311,314 b310,312,321,323
b323,325,358,370 b350,352,368,368 r362,363,367,369 b360,364,379,383 p370,371,379,381 b375,377,379,381 w367,369,378,380 p380,381,390,394 r376,377,385,387 r355,357,377,377
b352,358,361,363 r354,361,363,364 b357,358,366,367 w362,364,367,369 b371,374,377,383 r357,357,370,372 r328,336,346,349 b332,334,342,346 r336,339,340,345 n276,277,278,279
r201,211,229,253 s138,138,203,203 r178,191,202,220 b216,220,232,235 r221,226,242,244 b216,227,229,234 r220,225,234,246 b225,228,247,249 b248,250,261,274 b250,259,278,280
r262,268,272,276 b257,264,269,272 b259,262,272,276 r257,260,278,285 w250,261,267,274 b257,262,264,273 p215,219,260,260 b205,224,231,235 r205,210,221,226 b199,217,223,225
b212,218,237,249 b239,242,251,261 r227,228,246,250 b230,230,241,245 r224,227,238,240 b228,228,230,247 b241,245,247,258 b244,247,260,260 b257,260,286,291 r270,278,284,294
r270,275,278,287 r255,257,274,274 b254,254,267,272 b259,266,270,271 b271,273,276,279 b270,273,282,283 b284,284,303,303 r291,293,304,304 r283,290,292,297 b288,290,298,301
b297,299,312,312 r300,302,311,311 r296,296,303,303 b297,299,309,311 b308,310,312,317 p272,290,297,299 r271,276,293,295 b278,280,288,293 r278,284,293,293 b281,284,289,291
b284,289,291,294 b288,290,294,295 b293,295,300,305 r279,287,298,302 r281,284,287,290 b285,290,292,294 r287,289,294,295 b289,293,294,299 r278,280,289,294 b279,280,287,287
r274,274,283,283 r268,270,274,277 r255,260,269,269 b258,261,269,269 r259,260,269,269 b254,254,264,267 b257,263,271,272 r263,263,274,274 r257,263,264,265 r255,258,261,262
b257,259,273,275 r255,257,283,289 r252,252,258,262 r240,242,255,255 r239,239,242,247 r221,227,239,241 r222,225,234,234 b219,223,244,246 r231,233,238,242 b228,231,238,243
r225,226,238,245 b222,223,233,236 b230,231,242,243 r232,234,240,242 b237,243,246,247 r238,240,244,248 b243,245,255,256 r249,250,252,264 b253,254,278,284 b340,342,344,344`.split(/\s+/);
const kinds = { b: ['#50f0ff', 'url(#blue)'], r: ['#ff2020', 'url(#red)'], p: ['#ff2020', 'url(#pink)'], w: ['#ffffff', 'url(#white)'], n: ['#ffffff', '#ffffff'], s: ['#ff0000', '#ff0000'] };
function candle(text, n) {
  const x = Math.round(6 + n * 12.17);
  const [high, top, bottom, low] = text.slice(1).split(',').map(Number);
  const [wick, body] = kinds[text[0]];
  const frame = text[0] === 'w' ? `<path d="M${x - 5}.5 ${high}.5h10V${low}.5h-10z" fill="#000" stroke="#c0c0c0"/>` : '';
  const edge = text[0] === 's' ? `<path d="M${x - 6} ${top}h11V${bottom}h-11z" fill="#00d0ff"/>` : '';
  const half = text[0] === 's' ? 4 : 5;
  return frame + edge + `<path d="M${x} ${high}V${low}" stroke="${wick}" stroke-width="2"/>` +
    `<rect x="${x - half}" y="${top}" width="${half * 2}" height="${Math.max(1, bottom - top)}" fill="${body}"/>`;
}
const signals = [103, 188, 200, 346, 407, 444, 468, 480, 492, 504, 590, 602, 663, 699, 712, 724, 736, 760, 797, 858, 882, 919, 943, 1004, 1040, 1077, 1089, 1138, 1187, 1199, 1211, 1223, 1247, 1260, 1321, 1333, 1345, 1369, 1394, 1515];
const bags = [[54, 381], [212, 382], [310, 444], [444, 415], [651, 358], [870, 349], [967, 372], [1004, 374], [1040, 371], [1150, 363], [1199, 366], [1381, 332]];
const stroke = color => `<polyline points="${lines[color]}" fill="none" stroke="${color}" stroke-width="2"/>`;
put('price-plot',
  '<path d="M435 350H1620v8H435zM1568 284h52v56h-52z" fill="#848484"/>' +
  signals.map(x => `<rect x="${x - 1}" y="72" width="2" height="2" fill="#f0f"/>`).join('') +
  teal.map(p => `<polygon points="${p}" fill="#0068a0"/>`).join('') +
  magenta.map(p => `<polygon points="${p}" fill="#f000f0"/>`).join('') +
  stroke('#ffffff') + stroke('#ffff00') + stroke('#ff0000') + stroke('#00ff00') +
  candles.map(candle).join('') +
  bags.map(([x, y]) => `<use href="#bag" x="${x}" y="${y}" shape-rendering="auto"/>`).join('') +
  [[529, 209], [1272, 253], [1430, 212]].map(([x, y]) => `<use href="#runner" x="${x}" y="${y}" shape-rendering="auto"/>`).join(''));

// Histogram: left, right, top; each bar is split into five heat bands
const bars = [[151, 176, 889], [176, 189, 912], [189, 201, 924], [201, 212, 930], [212, 224, 888], [224, 237, 854], [237, 262, 560], [262, 273, 748], [273, 298, 602], [298, 310, 769], [310, 322, 852], [322, 347, 659], [347, 359, 797], [359, 371, 866], [371, 383, 901], [383, 396, 918], [396, 408, 927], [408, 420, 931], [420, 432, 933], [432, 444, 934],
  [821, 834, 878], [834, 859, 828], [859, 871, 882], [871, 883, 909], [883, 895, 922], [895, 907, 929], [907, 919, 932], [919, 931, 867], [931, 956, 829], [956, 968, 882], [968, 993, 857], [993, 1005, 896], [1005, 1016, 916], [1016, 1041, 870], [1041, 1053, 902], [1053, 1066, 919], [1066, 1078, 927], [1078, 1090, 931], [1090, 1102, 933], [1102, 1114, 934], [1564, 1589, 510]];
const bands = [['#ff0000', 1], ['#ff6600', 2 / 3], ['#ff9900', 1 / 2], ['#ffcc00', 1 / 3], ['#ffff00', 1 / 6]];
put('volume-plot', bars.map(([left, right, top]) => bands.map(([color, share]) => {
  const h = Math.round((936 - top) * share);
  return `<rect x="${left}" y="${936 - h}" width="${right - left}" height="${h}" fill="${color}"/>`;
}).join('')).join('') + '<rect x="5" y="935" width="1584" height="1" fill="#ffff00"/>');

const months = [[211, 8], [479, 9], [637, 10], [857, 11], [1112, 12], [1380, 1], [1576, 2]];
put('dates', months.map(([x, m]) => `<path d="M${x}.5 944V961" stroke="${RED}"/><text class="axis" x="${x + 2}" y="956">${m}</text>`).join('') +
  [278, 345, 412, 519, 559, 599, 692, 747, 802, 921, 985, 1048, 1177, 1246, 1313, 1429, 1478, 1526].map(x => `<path d="M${x}.5 945v3" stroke="${RED}"/>`).join(''));
```
